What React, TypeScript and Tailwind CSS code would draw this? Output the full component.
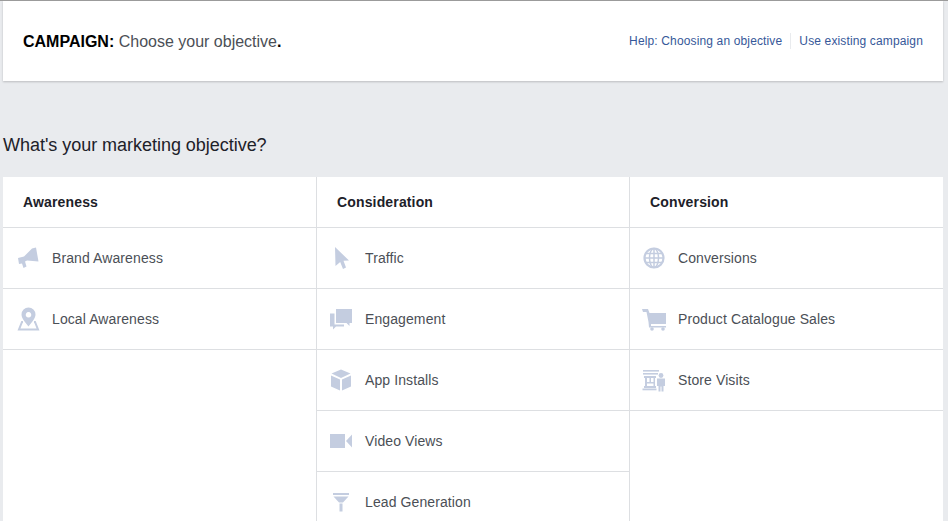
const iconColor = "#c4cde0";

const Megaphone = () => (
  <svg width="24" height="24" viewBox="0 0 24 24" fill={iconColor}>
    <path d="M2 12 L8 10.5 L16 2.5 L20 1.5 L22.5 15.5 L11 14.5 L9 15.5 L10.5 20.5 L7.5 22 L6 17.5 L3 18 Z" />
  </svg>
);

const Pin = () => (
  <svg width="24" height="24" viewBox="0 0 24 24">
    <path
      fill={iconColor}
      fillRule="evenodd"
      d="M12.5 0.5 a7 7 0 0 1 7 7 c0 4 -4 8 -7 12 c-3 -4 -7 -8 -7 -12 a7 7 0 0 1 7 -7 Z M12.5 5 a2.8 2.8 0 1 0 0.01 0 Z"
    />
    <path fill="none" stroke={iconColor} strokeWidth="2" d="M7 15 L6 15 L3 22.5 L22 22.5 L19 15 L18 15" />
  </svg>
);

const Cursor = () => (
  <svg width="24" height="24" viewBox="0 0 24 24" fill={iconColor}>
    <path d="M6 1 L20 14.5 L14.5 14.8 L17 21.5 L14 23 L11.2 16 L6.5 20 Z" />
  </svg>
);

const Chat = () => (
  <svg width="24" height="24" viewBox="0 0 24 24" fill={iconColor}>
    <path d="M7 2 L23 2 L23 16 L20.5 16 L20.5 19 L17.5 16 L7 16 Z" />
    <path d="M1 6.5 L5.5 6.5 L5.5 17.5 L15 17.5 L15 19.5 L7 19.5 L4 22.5 L4 19.5 L1 19.5 Z" />
  </svg>
);

const Box = () => (
  <svg width="24" height="24" viewBox="0 0 24 24" fill={iconColor}>
    <path d="M12 1.5 L21.5 5.5 L12 10 L2.5 5.5 Z" />
    <path d="M2 7.5 L11 11.5 L11 22.5 L2 18.5 Z" />
    <path d="M22 7.5 L13 11.5 L13 22.5 L22 18.5 Z" />
  </svg>
);

const Video = () => (
  <svg width="24" height="24" viewBox="0 0 24 24" fill={iconColor}>
    <rect x="1" y="5" width="15" height="14" />
    <path d="M17 12 L23 5.5 L23 18.5 Z" />
  </svg>
);

const Funnel = () => (
  <svg width="24" height="24" viewBox="0 0 24 24" fill={iconColor}>
    <rect x="4" y="3" width="16" height="2" />
    <path d="M4.5 6.5 L19.5 6.5 L14 12.5 L10 12.5 Z" />
    <rect x="10.5" y="13.5" width="3" height="8" />
  </svg>
);

const Globe = () => (
  <svg width="24" height="24" viewBox="0 0 24 24" fill="none" stroke={iconColor} strokeWidth="1.5">
    <circle cx="12" cy="12" r="9.5" strokeWidth="2.2" />
    <ellipse cx="12" cy="12" rx="4.5" ry="9.5" />
    <path d="M12 2.5 V21.5 M2.5 12 H21.5 M4 7.5 H20 M4 16.5 H20" />
  </svg>
);

const Cart = () => (
  <svg width="24" height="24" viewBox="0 0 24 24" fill={iconColor}>
    <path d="M0 2 L6 2 L7.5 6 L24 6 L24 17 L9 17 L9 19 L24 19 L24 20.5 L7 20.5 L6.5 15 L4.5 5 L1 5 Z" />
    <circle cx="10" cy="22" r="1.8" />
    <circle cx="21" cy="22" r="1.8" />
  </svg>
);

const Store = () => (
  <svg width="24" height="24" viewBox="0 0 24 24" fill={iconColor}>
    <rect x="1" y="2" width="16" height="1.6" />
    <rect x="1" y="5" width="15" height="1.6" />
    <path fillRule="evenodd" d="M2 8 H14 V10 H13 V18 H14 V20 H2 V18 H3 V10 H2 Z M5 10 V14 H7.5 V10 Z M9 10 V14 H11.5 V10 Z M5 15.5 V18 H11.5 V15.5 Z" />
    <rect x="0.5" y="20.5" width="14" height="1.8" />
    <circle cx="19" cy="7.5" r="2.4" />
    <path d="M15 10.5 H23 V18 H21.5 V23.5 H19.5 V18.5 H18.5 V23.5 H16.5 V18 H15 Z" />
  </svg>
);

const columns = [
  {
    title: "Awareness",
    pad: "pl-[13px]",
    rows: [
      { label: "Brand Awareness", icon: <Megaphone /> },
      { label: "Local Awareness", icon: <Pin /> },
    ],
  },
  {
    title: "Consideration",
    pad: "pl-3",
    rows: [
      { label: "Traffic", icon: <Cursor /> },
      { label: "Engagement", icon: <Chat /> },
      { label: "App Installs", icon: <Box /> },
      { label: "Video Views", icon: <Video /> },
      { label: "Lead Generation", icon: <Funnel /> },
    ],
  },
  {
    title: "Conversion",
    pad: "pl-3",
    rows: [
      { label: "Conversions", icon: <Globe /> },
      { label: "Product Catalogue Sales", icon: <Cart /> },
      { label: "Store Visits", icon: <Store /> },
    ],
  },
];

const App = () => {
  return (
    <div className="h-[521px] w-[948px] overflow-hidden bg-[#e9ebee] border-t border-[#9b9b9b] pl-[3px] pr-[5px] font-['Liberation_Sans',Arial,sans-serif]">
      <div className="flex h-20 items-center justify-between bg-white pl-5 pr-5 shadow-[0_1px_2px_rgba(0,0,0,0.2)]">
        <h1 className="pt-[2px] text-base text-[#4b4f56]">
          <span className="font-bold text-black">CAMPAIGN:</span> Choose your objective
          <span className="font-bold text-black">.</span>
        </h1>
        <div className="flex items-center text-xs tracking-[0.14px] text-[#365899]">
          <a className="pr-2">Help: Choosing an objective</a>
          <a className="border-l border-[#e9ebee] pl-2 leading-4">Use existing campaign</a>
        </div>
      </div>
      <h2 className="mt-[51px] mb-[19px] text-lg leading-[26px] tracking-[-0.03px] text-[#1d2129]">
        What's your marketing objective?
      </h2>
      <div className="grid h-[400px] grid-cols-[314px_313px_313px] bg-white">
        {columns.map((col, i) => (
          <div key={col.title} className={i < 2 ? "border-r border-[#dddfe2]" : ""}>
            <div className="flex h-[51px] items-center border-b border-[#dddfe2] pl-5 text-sm font-bold tracking-[0.15px] text-[#1d2129]">
              {col.title}
            </div>
            {col.rows.map((row) => (
              <div
                key={row.label}
                className={`flex h-[61px] items-center gap-3 border-b border-[#dddfe2] text-sm tracking-[0.1px] text-[#4b4f56] ${col.pad}`}
              >
                {row.icon}
                <span>{row.label}</span>
              </div>
            ))}
          </div>
        ))}
      </div>
    </div>
  );
};

export default App;
